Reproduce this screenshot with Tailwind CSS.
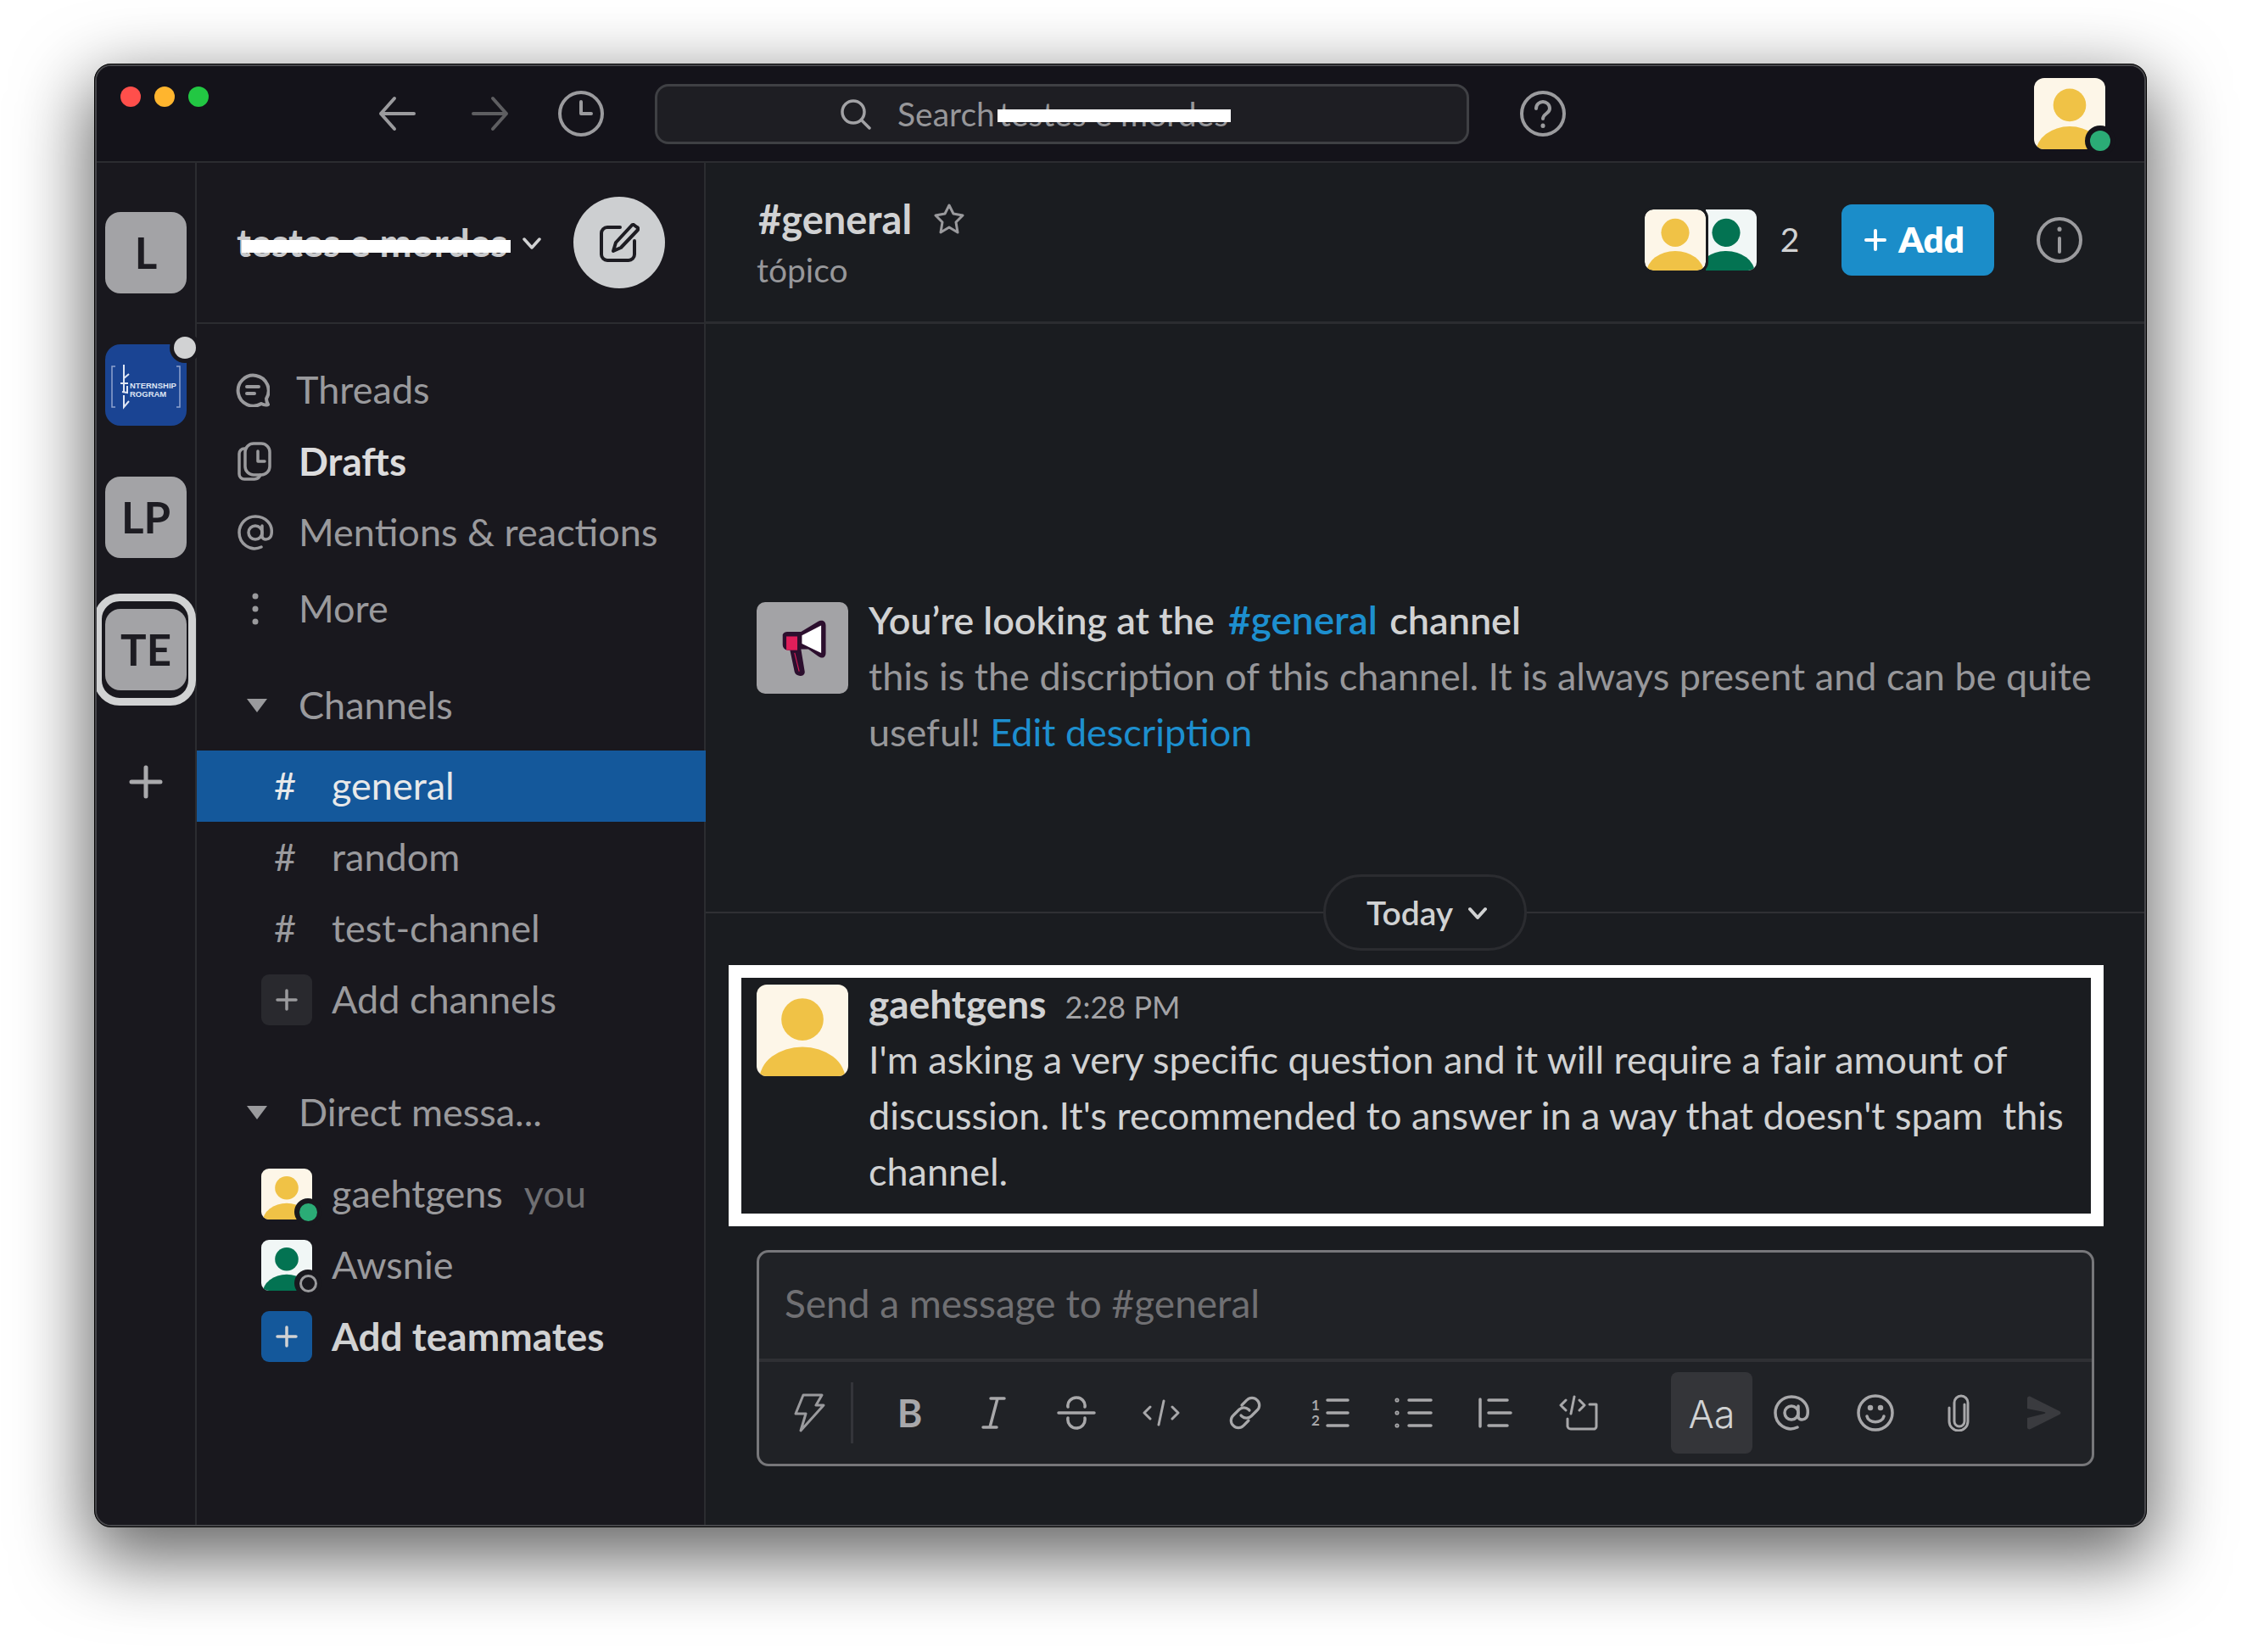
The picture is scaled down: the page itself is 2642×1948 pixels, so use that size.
<!doctype html>
<html><head><meta charset="utf-8"><script src="https://cdn.jsdelivr.net/npm/@tailwindcss/browser@4"></script></head>
<body class="bg-white">
<svg width="0" height="0" class="absolute">
<defs>
<symbol id="ay" viewBox="0 0 100 100"><rect width="100" height="100" fill="#fdf6e8"/><ellipse cx="50" cy="38" rx="23" ry="23" fill="#f0c246"/><ellipse cx="50" cy="104" rx="47" ry="36" fill="#f0c246"/></symbol>
<symbol id="ag" viewBox="0 0 100 100"><rect width="100" height="100" fill="#f1f7f6"/><ellipse cx="50" cy="38" rx="23" ry="23" fill="#037352"/><ellipse cx="50" cy="104" rx="47" ry="36" fill="#037352"/></symbol>
</defs></svg>
<div class="w-[2642px] h-[1948px] pl-[111px] pt-[75px] font-['Lato',sans-serif] overflow-hidden">
<div class="w-[2420px] h-[1726px] rounded-[20px] border-[3px] border-[#47474b] outline outline-1 outline-offset-[-1px] outline-black flex flex-col overflow-hidden bg-[#19181e] shadow-[0_30px_85px_8px_rgba(0,0,0,0.6)]">

<!-- title bar -->
<div class="h-[114px] shrink-0 border-b-[2px] border-[#2b2c30] bg-[#14131a] flex items-center pl-[28px] pr-[46px]">
  <div class="flex gap-[16px] self-start mt-[24px]">
    <div class="w-[24px] h-[24px] rounded-full bg-[#ff4f4b]"></div>
    <div class="w-[24px] h-[24px] rounded-full bg-[#ffb52e]"></div>
    <div class="w-[24px] h-[24px] rounded-full bg-[#22c743]"></div>
  </div>
  <svg class="ml-[196px]" width="54" height="54" viewBox="0 0 54 54" fill="none" stroke="#9b9b9e" stroke-width="4" stroke-linecap="round" stroke-linejoin="round"><path d="M46 27H7M23 9 7 27l16 18"/></svg>
  <svg class="ml-[54px]" width="54" height="54" viewBox="0 0 54 54" fill="none" stroke="#5e5e61" stroke-width="4" stroke-linecap="round" stroke-linejoin="round"><path d="M8 27h39M31 9l16 18-16 18"/></svg>
  <svg class="ml-[54px]" width="54" height="54" viewBox="0 0 54 54" fill="none" stroke="#9b9b9e" stroke-width="4" stroke-linecap="round" stroke-linejoin="round"><circle cx="27" cy="27" r="25"/><path d="M27 13v14h12"/></svg>
  <div class="ml-[60px] w-[960px] h-[71px] rounded-[16px] border-[3px] border-[#3f4044] bg-[#1e1e23] flex items-center pl-[214px]">
    <svg width="38" height="38" viewBox="0 0 38 38" fill="none" stroke="#a2a2a5" stroke-width="3.500" stroke-linecap="round"><circle cx="17" cy="17" r="13"/><path d="m27 27 9 9"/></svg>
    <div class="ml-[31px] text-[39px] leading-[50px] text-[#97979a] flex">
      <span>Search</span>
      <span class="relative ml-[5px] whitespace-nowrap">testes e mordes<span class="absolute left-[-2px] right-[-3px] top-[20px] h-[15px] bg-white"></span></span>
    </div>
  </div>
  <svg class="ml-[60px]" width="54" height="54" viewBox="0 0 54 54" fill="none" stroke="#9b9b9e" stroke-width="4" stroke-linecap="round"><circle cx="27" cy="27" r="25"/><path d="M19 21c0-5 4-8 8-8s8 3 8 8c0 6-8 6-8 12"/><path d="M27 41v.5" stroke-width="5"/></svg>
  <div class="ml-auto relative w-[84px] h-[84px]">
    <svg class="rounded-[12px]" width="84" height="84"><use href="#ay"/></svg>
    <div class="absolute right-[-12px] bottom-[-8px] w-[36px] h-[36px] rounded-full bg-[#14131a] flex items-center justify-center"><div class="w-[24px] h-[24px] rounded-full bg-[#2bac76]"></div></div>
  </div>
</div>

<div class="flex-1 flex min-h-0">
<!-- rail -->
<div class="w-[118px] shrink-0 border-r-[2px] border-[#2b2c30] pt-[58px] pl-[10px] flex flex-col text-[#1d1c22] font-bold text-[51px] bg-[#19181e]">
  <div class="w-[96px] h-[96px] rounded-[18px] bg-[#a3a3a6] flex items-center justify-center">L</div>
  <div class="relative w-[96px] h-[96px] mt-[60px] rounded-[18px] bg-[#1a4493]">
    <svg class="absolute inset-0" width="96" height="96" viewBox="0 0 96 96" fill="none" stroke="#dfe6f4" stroke-width="1.500">
      <path d="M12 26H8v48h4M84 26h4v48h-4" stroke="#8fa3cf"/>
      <path d="M22 24v16l6-5M22 40v16M18 46h9M20 56l6 1v-8M22 60v14l6-7" stroke-width="2"/>
      <text x="29" y="52" font-family="Liberation Sans" font-size="9.500" fill="#dfe6f4" stroke="none">NTERNSHIP</text>
      <text x="29" y="62" font-family="Liberation Sans" font-size="9.500" fill="#dfe6f4" stroke="none">ROGRAM</text>
    </svg>
    <div class="absolute right-[-16px] top-[-14px] w-[36px] h-[36px] rounded-full bg-[#19181e] flex items-center justify-center"><div class="w-[26px] h-[26px] rounded-full bg-[#d1d2d3]"></div></div>
  </div>
  <div class="w-[96px] h-[96px] mt-[60px] rounded-[18px] bg-[#a3a3a6] flex items-center justify-center">LP</div>
  <div class="relative w-[96px] h-[96px] mt-[60px] rounded-[18px] bg-[#a3a3a6] flex items-center justify-center">TE
    <div class="absolute left-[-13px] top-[-18px] w-[120px] h-[132px] rounded-[30px] border-[9px] border-[#d1d2d3]"></div>
  </div>
  <svg class="ml-[28px] mt-[88px]" width="40" height="40" viewBox="0 0 40 40" stroke="#a9a9ac" stroke-width="5" stroke-linecap="round"><path d="M20 3v34M3 20h34"/></svg>
</div>

<!-- sidebar -->
<div class="w-[600px] shrink-0 border-r-[2px] border-[#2b2c30] flex flex-col text-[45px] text-[#9a9a9d]">
  <div class="h-[190px] shrink-0 border-b-[2px] border-[#2b2c30] flex items-center pl-[47px]">
    <span class="relative text-[45.500px] font-bold text-[#c9cacc] whitespace-nowrap leading-[50px]">testes e mordes<span class="absolute left-[6px] right-[-4px] top-[22px] h-[15px] bg-white"></span></span>
    <svg class="ml-[18px]" width="22" height="22" viewBox="0 0 22 22" fill="none" stroke="#d1d2d3" stroke-width="3.500" stroke-linecap="round" stroke-linejoin="round"><path d="m2 7 9 10 9-10"/></svg>
    <div class="ml-auto mr-[46px] w-[108px] h-[108px] rounded-full bg-[#cdcfd1] flex items-center justify-center">
      <svg width="48" height="48" viewBox="0 0 48 48" fill="none" stroke="#1d1c22" stroke-width="4" stroke-linecap="round" stroke-linejoin="round"><path d="M25 6H10a7 7 0 0 0-7 7v25a7 7 0 0 0 7 7h25a7 7 0 0 0 7-7V22"/><path d="m41 3 4 3a2 2 0 0 1 1 3L26 30l-9 4 3-10L39 3.500a2 2 0 0 1 2-.5z"/></svg>
    </div>
  </div>

  <div class="mt-[36px] h-[84px] flex items-center pl-[46px]">
    <svg class="shrink-0" width="40" height="40" viewBox="0 0 40 40" fill="none" stroke="#9a9a9d" stroke-width="4" stroke-linecap="round" stroke-linejoin="round"><path d="M38 37c-3 1-6 0-8-1a18 18 0 1 1 6-6c0 3 1 5 2 7z"/><path d="M13 16h14M13 24h9"/></svg>
    <span class="ml-[31px]">Threads</span>
  </div>
  <div class="h-[84px] flex items-center pl-[48px]">
    <svg class="shrink-0" width="40" height="46" viewBox="0 0 40 46" fill="none" stroke="#9a9a9d" stroke-width="3.500" stroke-linecap="round" stroke-linejoin="round"><path d="M10 8H8a6 6 0 0 0-6 6v24a6 6 0 0 0 6 6h12a8 8 0 0 0 7-5"/><rect x="9" y="2" width="29" height="37" rx="10"/><path d="M24 11v12h8"/></svg>
    <span class="ml-[32px] pb-[2px] text-[46px] font-bold text-[#dcdcdd]">Drafts</span>
  </div>
  <div class="h-[84px] flex items-center pl-[48px]">
    <svg class="shrink-0" width="42" height="42" viewBox="0 0 42 42" fill="none" stroke="#9a9a9d" stroke-width="3.500" stroke-linecap="round"><circle cx="21" cy="21" r="8"/><path d="M29 13v12c0 6 10 5 11-2 2-12-7-21-19-21A19 19 0 0 0 2 21c0 13 13 23 26 17"/></svg>
    <span class="ml-[30px]">Mentions &amp; reactions</span>
  </div>
  <div class="mt-[6px] h-[84px] flex items-center pl-[48px]">
    <svg class="shrink-0" width="42" height="38" viewBox="0 0 42 38" fill="#9a9a9d"><circle cx="21" cy="4" r="3.500"/><circle cx="21" cy="19" r="3.500"/><circle cx="21" cy="34" r="3.500"/></svg>
    <span class="ml-[30px]">More</span>
  </div>
  <div class="mt-[30px] h-[84px] flex items-center pl-[50px]">
    <svg class="shrink-0" width="42" height="18" viewBox="0 0 42 18" fill="#9a9a9d"><path d="M9 1h24L21 17z"/></svg>
    <span class="ml-[28px]">Channels</span>
  </div>
  <div class="mt-[11px] mr-[-2px] h-[84px] flex items-center pl-[91px] bg-[#14589b] text-[#e8e9ea]">
    <span class="w-[22px] text-center">#</span><span class="ml-[46px]">general</span>
  </div>
  <div class="h-[84px] flex items-center pl-[91px]"><span class="w-[22px] text-center">#</span><span class="ml-[46px]">random</span></div>
  <div class="h-[84px] flex items-center pl-[91px]"><span class="w-[22px] text-center">#</span><span class="ml-[46px]">test-channel</span></div>
  <div class="h-[84px] flex items-center pl-[76px]">
    <div class="w-[60px] h-[60px] rounded-[9px] bg-[#29292e] flex items-center justify-center"><svg width="26" height="26" viewBox="0 0 26 26" stroke="#9a9a9d" stroke-width="3.500" stroke-linecap="round"><path d="M13 2v22M2 13h22"/></svg></div>
    <span class="ml-[23px]">Add channels</span>
  </div>
  <div class="mt-[49px] h-[84px] flex items-center pl-[50px]">
    <svg class="shrink-0" width="42" height="18" viewBox="0 0 42 18" fill="#9a9a9d"><path d="M9 1h24L21 17z"/></svg>
    <span class="ml-[28px]">Direct messa...</span>
  </div>
  <div class="mt-[12px] h-[84px] flex items-center pl-[76px]">
    <div class="relative w-[60px] h-[60px]"><svg class="rounded-[9px]" width="60" height="60"><use href="#ay"/></svg>
      <div class="absolute right-[-11px] bottom-[-7px] w-[32px] h-[32px] rounded-full bg-[#19181e] flex items-center justify-center"><div class="w-[21px] h-[21px] rounded-full bg-[#2bac76]"></div></div></div>
    <span class="ml-[23px]">gaehtgens</span><span class="ml-[25px] text-[#6f6f72]">you</span>
  </div>
  <div class="h-[84px] flex items-center pl-[76px]">
    <div class="relative w-[60px] h-[60px]"><svg class="rounded-[9px]" width="60" height="60"><use href="#ag"/></svg>
      <div class="absolute right-[-11px] bottom-[-7px] w-[32px] h-[32px] rounded-full bg-[#19181e] flex items-center justify-center"><div class="w-[21px] h-[21px] rounded-full border-[3px] border-[#9a9a9d]"></div></div></div>
    <span class="ml-[23px]">Awsnie</span>
  </div>
  <div class="h-[84px] flex items-center pl-[76px]">
    <div class="w-[60px] h-[60px] rounded-[9px] bg-[#14589b] flex items-center justify-center"><svg width="26" height="26" viewBox="0 0 26 26" stroke="#d1d2d3" stroke-width="3.500" stroke-linecap="round"><path d="M13 2v22M2 13h22"/></svg></div>
    <span class="ml-[23px] pb-[2px] text-[46px] font-bold text-[#d1d2d3]">Add teammates</span>
  </div>
</div>

<!-- main -->
<div class="flex-1 min-w-0 bg-[#1a1c20] flex flex-col">
  <div class="h-[190px] shrink-0 border-b-[3px] border-[#2b2c30] flex items-center pl-[60px] pr-[73px]">
    <div class="flex flex-col pb-[3px]">
      <div class="flex items-center h-[66px]"><span class="ml-[2px] text-[47px] font-bold text-[#d1d2d3]">#general</span>
        <svg class="ml-[25px]" width="38" height="38" viewBox="0 0 38 38" fill="none" stroke="#9a9a9d" stroke-width="3" stroke-linejoin="round"><path d="m19 3 5 10 11 2-8 8 2 12-10-6-10 6 2-12-8-8 11-2z"/></svg>
      </div>
      <span class="text-[39px] leading-[50px] text-[#97979a] mt-[2px]">tópico</span>
    </div>
    <div class="ml-auto mb-[6px] flex items-center">
      <div class="relative w-[72px] h-[72px] rounded-[10px] overflow-hidden z-10 outline-[3px] outline-[#1a1c20]"><svg width="72" height="72"><use href="#ay"/></svg></div>
      <div class="w-[60px] h-[72px] rounded-r-[10px] overflow-hidden"><svg class="ml-[-12px]" width="72" height="72"><use href="#ag"/></svg></div>
      <span class="ml-[19px] w-[40px] text-[39px] text-center text-[#d1d2d3]">2</span>
      <div class="ml-[41px] w-[180px] h-[84px] rounded-[12px] bg-[#1b8dc9] flex items-center justify-center text-white font-extrabold text-[42px] pr-[8px]">
        <svg class="mr-[14px]" width="26" height="26" viewBox="0 0 26 26" stroke="#fff" stroke-width="4" stroke-linecap="round"><path d="M13 2v22M2 13h22"/></svg>Add
      </div>
      <svg class="ml-[50px]" width="54" height="54" viewBox="0 0 54 54" fill="none" stroke="#9b9b9e" stroke-width="4" stroke-linecap="round"><circle cx="27" cy="27" r="25"/><path d="M27 25v16"/><path d="M27 14v.5" stroke-width="5"/></svg>
    </div>
  </div>

  <div class="mt-[318px] flex pl-[60px] pr-[30px] text-[45px] leading-[66px]">
    <div class="w-[108px] h-[108px] mt-[10px] shrink-0 rounded-[10px] bg-[#a3a3a6] flex items-center justify-center">
      <svg width="65" height="67" viewBox="0 0 60 62">
        <path d="M8 16a6 6 0 0 1 6-3h14L46 2c6-3 9 0 9 4v30c0 5-4 7-9 3L36 32H28l4 24c1 6-9 7-11 1l-5-24h-2c-4 0-6-3-6-6z" fill="#2c0f2e"/>
        <path d="M12 18h12v15H12z" fill="#e01e5a"/><path d="M29 17 50 6v30L29 26z" fill="#fff"/><path d="m21 36 5 20" stroke="#e01e5a" stroke-width="1"/>
      </svg>
    </div>
    <div class="ml-[24px] mt-[-2px] text-[#97979a]">
      <div class="text-[#d1d2d3] font-semibold">You’re looking at the <span class="ml-[5px] mr-[3px] text-[46px] text-[#1d8fcf]">#general</span> channel</div>
      <div>this is the discription of this channel. It is always present and can be quite useful! <span class="text-[#1d8fcf]">Edit description</span></div>
    </div>
  </div>

  <div class="mt-[135px] h-[90px] relative flex justify-center">
    <div class="absolute left-0 right-0 top-[44px] h-[2px] bg-[#2f3034]"></div>
    <div class="relative w-[240px] h-[90px] rounded-full border-[3px] border-[#2b2c30] bg-[#1a1c20] flex items-center justify-center text-[39px] font-semibold text-[#d1d2d3] pl-[4px]">Today
      <svg class="ml-[18px]" width="22" height="22" viewBox="0 0 22 22" fill="none" stroke="#d1d2d3" stroke-width="4" stroke-linecap="round" stroke-linejoin="round"><path d="m2 7 9 10 9-10"/></svg>
    </div>
  </div>

  <div class="mt-[17px] ml-[27px] w-[1621px] h-[308px] border-[15px] border-white bg-[#1a1c20] flex pl-[18px] pt-[8px] text-[45px] leading-[66px] text-[#d1d2d3]">
    <svg class="shrink-0 rounded-[12px]" width="108" height="108"><use href="#ay"/></svg>
    <div class="ml-[24px] mt-[-10px]">
      <div class="flex items-baseline h-[65px]"><span class="text-[46px] font-bold">gaehtgens</span><span class="ml-[22px] text-[36px] text-[#a3a3a6]">2:28 PM</span></div>
      <div class="whitespace-pre-wrap">I'm asking a very specific question and it will require a fair amount of discussion. It's recommended to answer in a way that doesn't spam  this channel.</div>
    </div>
  </div>

  <div class="mt-[28px] ml-[60px] w-[1577px] h-[255px] rounded-[14px] border-[3px] border-[#77777a] bg-[#202226] flex flex-col">
    <div class="h-[129px] border-b-[4px] border-[#2f3034] pl-[30px] pt-[27px] text-[46px] leading-[66px] text-[#707073]">Send a message to #general</div>
    <div class="flex-1 flex items-center pl-[9px] pr-[8px]">
      <div class="w-[99px] h-[99px] flex items-center justify-center">
        <svg width="38" height="46" viewBox="0 0 38 46" fill="none" stroke="#9a9a9d" stroke-width="3" stroke-linejoin="round"><path d="M12 2h22l-7 12h9L9 44l6-20H3z"/></svg></div>
      <div class="w-[3px] h-[72px] bg-[#34353a]"></div>
      <div class="w-[99px] ml-[17px] flex justify-center text-[45px] font-bold text-[#a8a8aa] leading-none">B</div>
      <div class="w-[97px] flex justify-center">
        <svg width="30" height="38" viewBox="0 0 30 38" fill="none" stroke="#a8a8aa" stroke-width="3.500" stroke-linecap="round"><path d="M12 2h16M3 36h16M20 2l-9 34"/></svg></div>
      <div class="w-[100px] flex justify-center">
        <svg width="46" height="40" viewBox="0 0 46 40" fill="none" stroke="#a8a8aa" stroke-width="3.500" stroke-linecap="round"><path d="M2 20h42M33 13c1-6-4-11-10-11s-11 5-10 11M13 26c-1 7 4 12 10 12s11-5 10-12"/></svg></div>
      <div class="w-[99px] flex justify-center">
        <svg width="44" height="32" viewBox="0 0 44 32" fill="none" stroke="#a8a8aa" stroke-width="3" stroke-linecap="round" stroke-linejoin="round"><path d="M9 9 2 16l7 7M35 9l7 7-7 7M25 2l-6 28"/></svg></div>
      <div class="w-[100px] flex justify-center">
        <svg width="40" height="40" viewBox="0 0 40 40" fill="none" stroke="#a8a8aa" stroke-width="3.200" stroke-linecap="round"><path d="m16 11 6-6a8 8 0 0 1 12 0 8 8 0 0 1 0 12l-7 7a8 8 0 0 1-11 0l-1-1"/><path d="m24 29-6 6a8 8 0 0 1-12 0 8 8 0 0 1 0-12l7-7a8 8 0 0 1 11 0l1 1"/></svg></div>
      <div class="w-[100px] flex justify-center relative">
        <div class="text-[17px] leading-[18px] font-bold text-[#a8a8aa] w-[12px] text-center mr-[6px]">1<br>2</div>
        <svg width="28" height="36" viewBox="0 0 28 36" stroke="#a8a8aa" stroke-width="3.500" stroke-linecap="round"><path d="M2 3h24M2 18h24M2 33h24"/></svg></div>
      <div class="w-[96px] flex justify-center">
        <svg width="46" height="36" viewBox="0 0 46 36" fill="#a8a8aa" stroke="#a8a8aa" stroke-width="3.500" stroke-linecap="round"><circle cx="4" cy="3" r=".8"/><circle cx="4" cy="18" r=".8"/><circle cx="4" cy="33" r=".8"/><path d="M18 3h26M18 18h26M18 33h26"/></svg></div>
      <div class="w-[97px] flex justify-center">
        <svg width="40" height="36" viewBox="0 0 40 36" stroke="#a8a8aa" stroke-width="3.500" stroke-linecap="round"><path d="M2 2v32M12 3h22M12 18h26M12 33h22"/></svg></div>
      <div class="w-[99px] flex justify-center">
        <svg width="46" height="42" viewBox="0 0 46 42" fill="none" stroke="#a8a8aa" stroke-width="3" stroke-linecap="round" stroke-linejoin="round"><path d="M8 6 2 12l6 6M24 6l6 6-6 6M18 2l-4 20"/><path d="M36 11h8v25a4 4 0 0 1-2 4H14a4 4 0 0 1-4-3v-9"/></svg></div>
      <div class="ml-auto mr-[-4px] w-[96px] h-[96px] rounded-[8px] bg-[#343539] flex items-center justify-center pt-[4px] text-[45px] font-light text-[#d1d2d3] font-['Inter',sans-serif]">Aa</div>
      <div class="w-[99px] flex justify-center">
        <svg width="42" height="42" viewBox="0 0 42 42" fill="none" stroke="#a8a8aa" stroke-width="3.500" stroke-linecap="round"><circle cx="21" cy="21" r="8"/><path d="M29 13v12c0 6 10 5 11-2 2-12-7-21-19-21A19 19 0 0 0 2 21c0 13 13 23 26 17"/></svg></div>
      <div class="w-[99px] flex justify-center">
        <svg width="44" height="44" viewBox="0 0 44 44" fill="none" stroke="#a8a8aa" stroke-width="3.500" stroke-linecap="round"><circle cx="22" cy="22" r="20"/><path d="M12 26c2 9 18 9 20 0"/><circle cx="16" cy="16" r="1.500" fill="#a8a8aa"/><circle cx="28" cy="16" r="1.500" fill="#a8a8aa"/></svg></div>
      <div class="w-[99px] flex justify-center">
        <svg width="32" height="44" viewBox="0 0 32 44" fill="none" stroke="#a8a8aa" stroke-width="3" stroke-linecap="round"><path d="M22 12v20a6 6 0 0 1-12 0V10a8 8 0 0 1 16 0v22a11 11 0 0 1-22 0V16"/></svg></div>
      <div class="w-[99px] flex justify-center">
        <svg width="42" height="40" viewBox="0 0 42 40" fill="#3a3b3f"><path d="M2 3c0-2 2-3 4-2l34 17c2 1 2 3 0 4L6 39c-2 1-4 0-4-2V26l20-5c2-1 2-1 0-2L2 15z"/></svg></div>
    </div>
  </div>
</div>
</div>
</div>
</div>
</body></html>
